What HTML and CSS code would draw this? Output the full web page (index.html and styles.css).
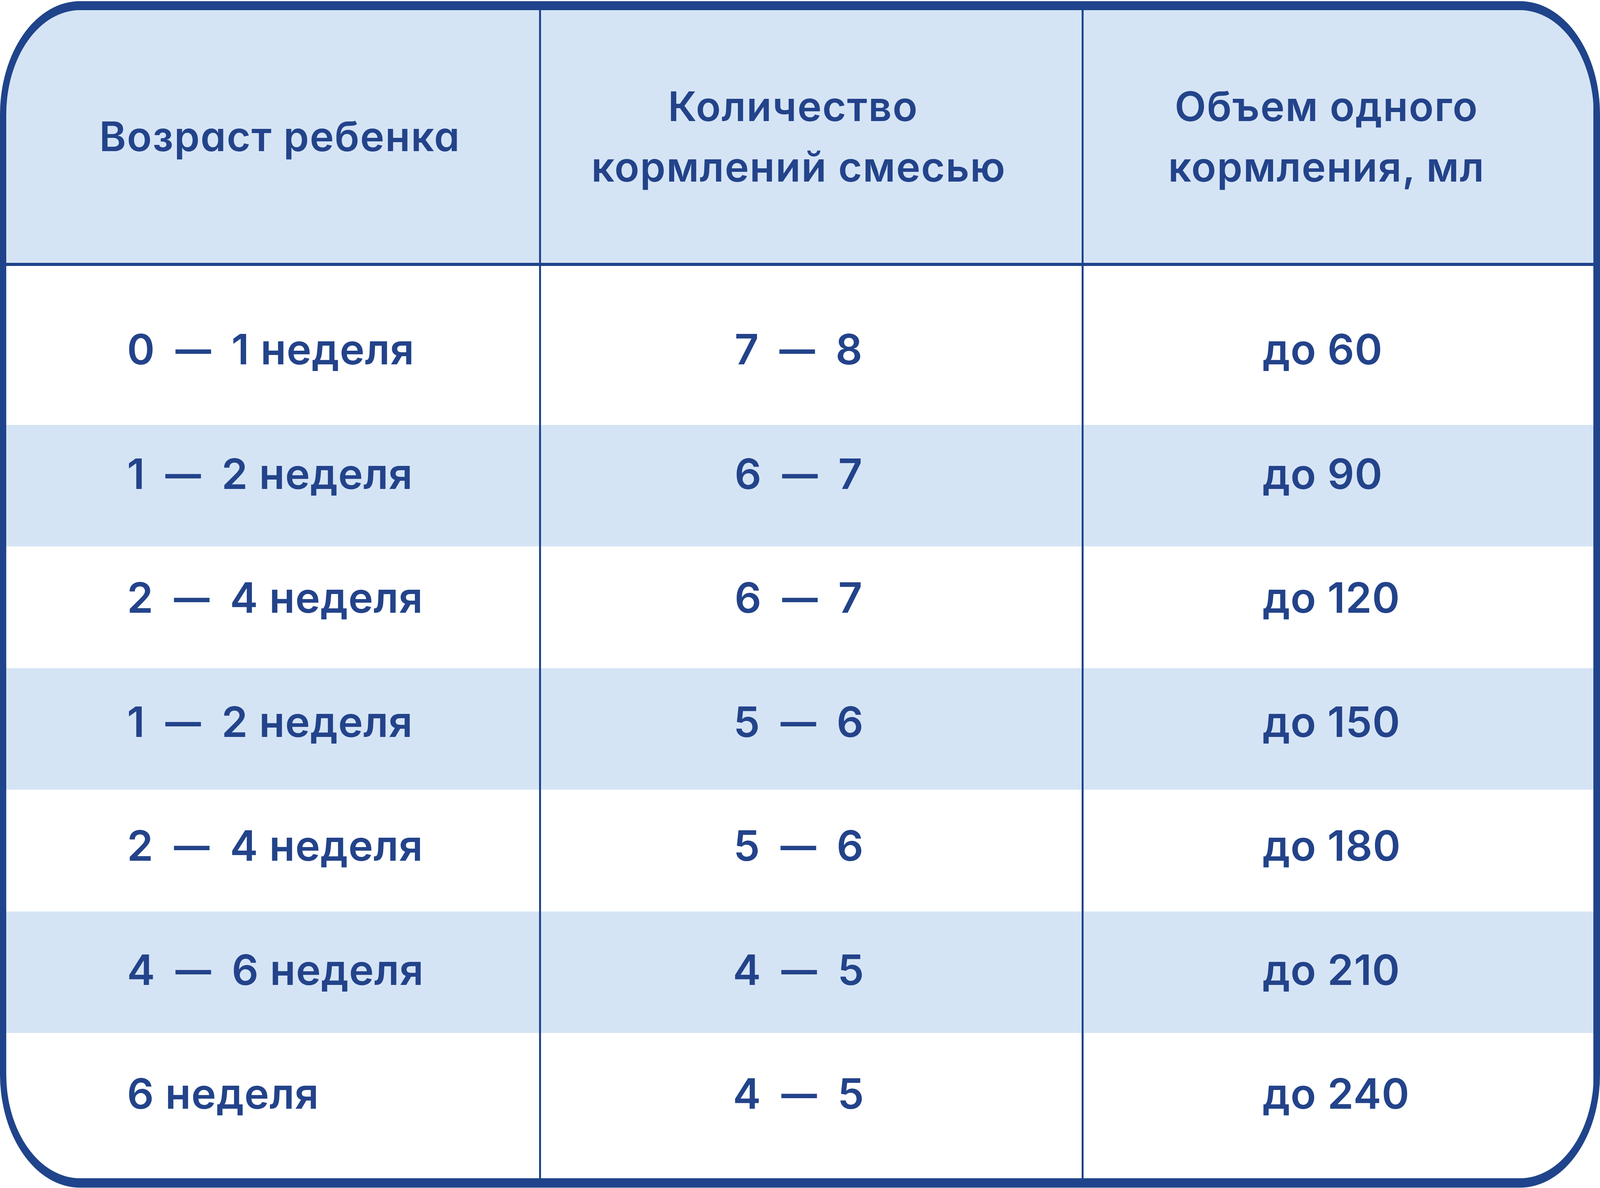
FILE: index.html
```html
<!DOCTYPE html>
<html lang="ru">
<head>
<meta charset="utf-8">
<title>Таблица кормления</title>
<link rel="stylesheet" href="styles.css">
</head>
<body>
<div class="table">
  <div class="row head">
    <div class="cell c1">Возраст ребенка</div>
    <div class="cell c2">Количество&nbsp;<br>кормлений смесью</div>
    <div class="cell c3">Объем одного<br>кормления, мл</div>
  </div>
  <div class="row">
    <div class="cell c1">0 <span class="dash">—</span> 1 неделя</div>
    <div class="cell c2">7 <span class="dash">—</span> 8</div>
    <div class="cell c3">до 60</div>
  </div>
  <div class="row alt">
    <div class="cell c1">1 <span class="dash">—</span> 2 неделя</div>
    <div class="cell c2">6 <span class="dash">—</span> 7</div>
    <div class="cell c3">до 90</div>
  </div>
  <div class="row">
    <div class="cell c1">2 <span class="dash">—</span> 4 неделя</div>
    <div class="cell c2">6 <span class="dash">—</span> 7</div>
    <div class="cell c3">до 120</div>
  </div>
  <div class="row alt">
    <div class="cell c1">1 <span class="dash">—</span> 2 неделя</div>
    <div class="cell c2">5 <span class="dash">—</span> 6</div>
    <div class="cell c3">до 150</div>
  </div>
  <div class="row">
    <div class="cell c1">2 <span class="dash">—</span> 4 неделя</div>
    <div class="cell c2">5 <span class="dash">—</span> 6</div>
    <div class="cell c3">до 180</div>
  </div>
  <div class="row alt">
    <div class="cell c1">4 <span class="dash">—</span> 6 неделя</div>
    <div class="cell c2">4 <span class="dash">—</span> 5</div>
    <div class="cell c3">до 210</div>
  </div>
  <div class="row">
    <div class="cell c1">6 неделя</div>
    <div class="cell c2">4 <span class="dash">—</span> 5</div>
    <div class="cell c3">до 240</div>
  </div>
</div>
</body>
</html>
```
FILE: styles.css
```css
:root {
  --ux: calc(100vw / 5803);
  --uy: calc(100vh / 3042);
  --uf: min(var(--ux), var(--uy));
}
html, body {
  margin: 0;
  padding: 0;
  height: 100%;
  overflow: hidden;
  background: #ffffff;
}
body {
  box-sizing: border-box;
  padding-top: calc(var(--uy) * 3);
  font-family: Inter, "Noto Sans", sans-serif;
  font-weight: 600;
  color: #23438a;
  font-feature-settings: "cv11" 1;
}
.table {
  width: calc(var(--ux) * 5803);
  box-sizing: border-box;
  border-style: solid;
  border-color: #20448b;
  border-width: calc(var(--uy) * 23) calc(var(--ux) * 24) calc(var(--uy) * 24) calc(var(--ux) * 23);
  border-radius: calc(var(--ux) * 290) / calc(var(--uy) * 290);
  overflow: hidden;
  background: #20448b;
}
.row {
  display: grid;
  grid-template-columns: calc(var(--ux) * 1932) calc(var(--ux) * 1961) calc(var(--ux) * 1849);
  column-gap: calc(var(--ux) * 7);
  height: calc(var(--uy) * 311.4);
  background: #20448b;
}
.cell {
  display: flex;
  align-items: center;
  background: #ffffff;
  font-size: calc(var(--uf) * 152);
  line-height: 1;
  letter-spacing: 0.01em;
  white-space: pre;
  box-sizing: border-box;
}
.row.alt .cell {
  background: #d5e4f5;
}
.row .c1 { padding-left: calc(var(--ux) * 438); }
.row .c2 { justify-content: center; padding-right: calc(var(--ux) * 91); }
.row .c3 { padding-left: calc(var(--ux) * 650); }

.dash {
  display: inline-block;
  transform: scaleX(0.85);
  margin: 0 calc(var(--ux) * 22);
}

.row.head {
  height: calc(var(--uy) * 647);
  border-bottom: calc(var(--uy) * 8) solid #20448b;
}
.row.head .cell {
  background: #d5e4f5;
  justify-content: center;
  text-align: center;
  font-size: calc(var(--uf) * 148);
  line-height: calc(var(--uy) * 155);
  letter-spacing: 0.02em;
  white-space: nowrap;
  padding-left: 0;
  padding-right: 0;
}
.row.head .c1 { padding-left: calc(var(--ux) * 52); }
.row.head .c2 { padding-right: calc(var(--ux) * 91); }
.row.head .c3 { padding-right: calc(var(--ux) * 86); }

.row:nth-child(2) { height: calc(var(--uy) * 407); }
.row:nth-child(2) .cell { padding-top: calc(var(--uy) * 21); }
.row:nth-child(3) .cell { padding-bottom: calc(var(--uy) * 61); }
.row:nth-child(4) .cell { padding-bottom: calc(var(--uy) * 49); }
.row:nth-child(5) .cell { padding-bottom: calc(var(--uy) * 36); }
.row:nth-child(6) .cell { padding-bottom: calc(var(--uy) * 24); }
.row:nth-child(7) .cell { padding-bottom: calc(var(--uy) * 11); }
.row:nth-child(8) { height: calc(var(--uy) * 372); }
.row:nth-child(8) .cell { padding-bottom: calc(var(--uy) * 60); }
```
